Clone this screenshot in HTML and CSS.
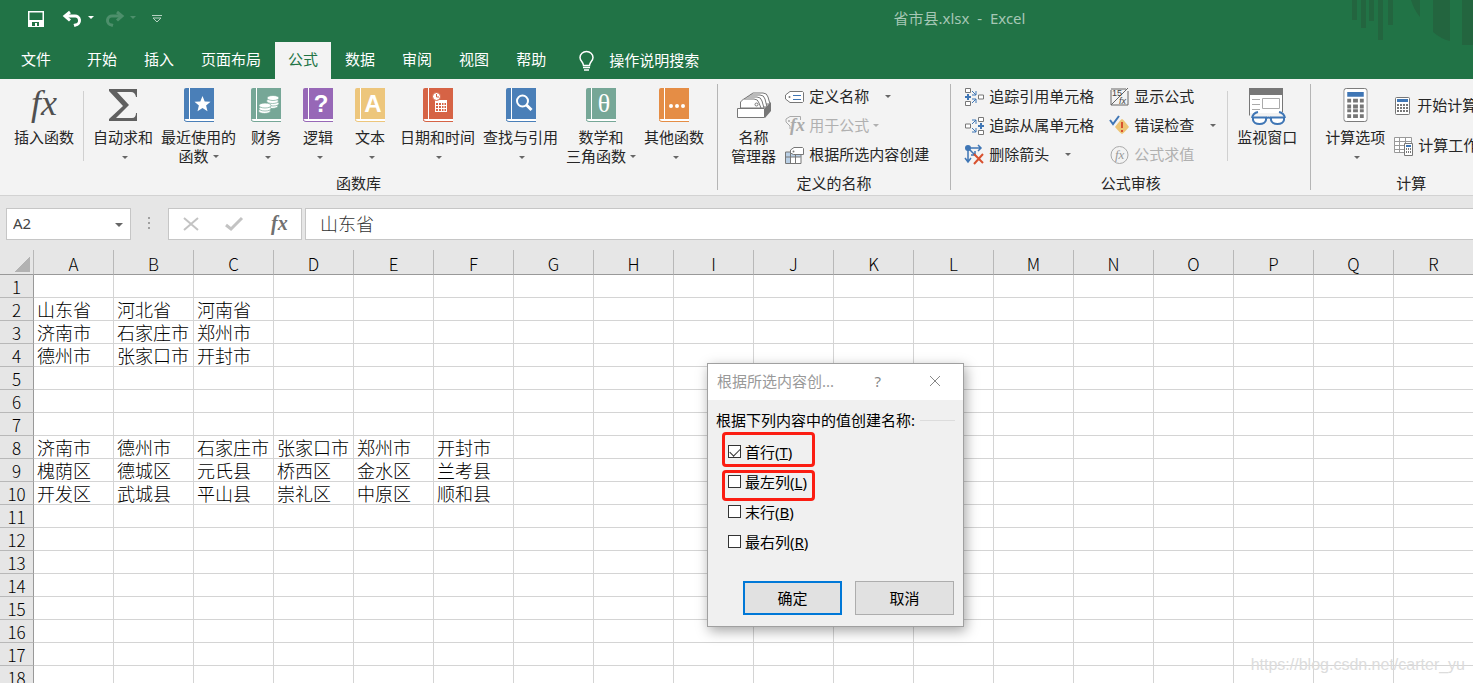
FILE: index.html
```html
<!DOCTYPE html>
<html lang="zh-CN">
<head>
<meta charset="utf-8">
<title>省市县.xlsx - Excel</title>
<link rel="stylesheet" href="styles.css">
</head>
<body>
<svg class="defs" aria-hidden="true">
  <symbol id="book" viewBox="0 0 30 34">
    <path d="M2 0H5V31H2Q1 31 0 32V2Q0 0 2 0Z" fill="currentColor"/>
    <path d="M6 0H30V31H6Z" fill="currentColor"/>
    <path d="M5 0h1v31H5zM3 31H30V33H3Q1 33 1 32 1 31 3 31Z" fill="#fff"/>
    <path d="M0 31.500Q.5 33.500 3 33.500H30" fill="none" stroke="currentColor"/>
  </symbol>
  <symbol id="calc" viewBox="0 0 25 35">
    <rect x=".5" y=".5" width="24" height="34" rx="2.500" fill="#fff" stroke="#777"/>
    <path d="M4 4h17v5H4z" fill="#3f76b5"/>
    <path d="M4 11h4v4H4zm6 0h5v4h-5zm7 0h4v4h-4zM4 17h4v4H4zm6 0h5v4h-5zm7 0h4v4h-4zM4 22h4v3H4zm6 0h5v3h-5zm7 0h4v3h-4zM4 27h4v4H4zm6 0h5v4h-5zm7 0h4v4h-4z" fill="#777"/>
  </symbol>
</svg>

<header class="titlebar">
  <div class="quick">
    <button class="q-save" aria-label="保存"><svg width="16" height="16" viewBox="0 0 16 16"><path d="M.75.75h14.500v14.500H.75z" fill="none" stroke="#fff" stroke-width="1.500"/><path d="M1 9h14v6H1z" fill="#fff"/><path d="M4 11h7v4H9v-3H7v3H4z" fill="#217346"/></svg></button>
    <button class="q-undo" aria-label="撤消"><svg width="19" height="17" viewBox="0 0 19 17"><path d="M3 5h8.500a4.500 4.500 0 0 1 1 9l-1.500.5" fill="none" stroke="#fff" stroke-width="3"/><path d="M7 1 2 5l5 4.500" fill="none" stroke="#fff" stroke-width="3"/></svg></button>
    <button class="q-more" aria-label="撤消列表"><svg width="6" height="3" viewBox="0 0 6 3"><path d="M0 0h6L3 3z" fill="#fff"/></svg></button>
    <button class="q-redo" aria-label="恢复"><svg width="19" height="17" viewBox="0 0 19 17"><path d="M16 5H7.500a4.500 4.500 0 0 0-1 9l1.500.5" fill="none" stroke="#4d8f6b" stroke-width="3"/><path d="m12 1 5 4-5 4.500" fill="none" stroke="#4d8f6b" stroke-width="3"/></svg></button>
    <button class="q-more" aria-label="恢复列表"><svg width="6" height="3" viewBox="0 0 6 3"><path d="M0 0h6L3 3z" fill="#4d8f6b"/></svg></button>
    <button class="q-custom" aria-label="自定义快速访问工具栏"><svg width="10" height="8" viewBox="0 0 10 8"><path d="M0 .5h10M1 3h8L5 7z" fill="none" stroke="#b5d2c1"/></svg></button>
  </div>
  <h1 class="doc-title">省市县.xlsx&nbsp; -&nbsp; Excel</h1>
  <svg class="pattern" width="121" height="46" viewBox="0 0 121 46" aria-hidden="true"><path d="M0 0h5v20H0zM9 0h5v28H9zM17 0h5v21h-5zM26 0h5v40h-5zM36 0h5v25h-5zM59 0h9v17Q62 10 59 0zM81 0h17v41q-9-2-17-9zM110 0h11v45h-11z" fill="#23653f"/></svg>
</header>

<nav class="tabs">
  <button class="tab file">文件</button>
  <button class="tab">开始</button>
  <button class="tab">插入</button>
  <button class="tab">页面布局</button>
  <button class="tab active">公式</button>
  <button class="tab">数据</button>
  <button class="tab">审阅</button>
  <button class="tab">视图</button>
  <button class="tab">帮助</button>
  <button class="tell"><svg width="15" height="20" viewBox="0 0 15 20"><path d="M4.500 14.500C4.500 11 1 10 1 6.500a6.500 6 0 0 1 13 0c0 3.500-3.500 4.500-3.500 8z" fill="none" stroke="#fff" stroke-width="1.500"/><path d="M4 16.500h7M5 19h5" stroke="#fff" stroke-width="1.500"/></svg>操作说明搜索</button>
</nav>

<section class="ribbon">
  <div class="group functions">
    <div class="tools">
      <button class="big first"><svg width="34" height="34" viewBox="0 0 34 34"><text x="4" y="27" class="fx-big">fx</text></svg><span>插入函数</span></button>
      <i class="rule"></i>
      <div class="library">
        <button class="big"><svg width="30" height="34" viewBox="0 0 30 34"><path d="M1 1h28v8h-1q-1-5-5-5H9l12 13L8 30h16q4 0 4-5h1v8H1v-2l14-13L1 3z" fill="#606060"/></svg><span>自动求和</span><i class="caret"></i></button>
        <button class="big blue"><svg width="30" height="34"><use href="#book"/><path d="m18.500 8 2.200 5.400 5.800.4-4.400 3.700 1.400 5.700-5-3.100-5 3.100 1.400-5.700-4.400-3.700 5.800-.4z" fill="#fff"/></svg><span>最近使用的</span><span class="line">函数<i class="caret"></i></span></button>
        <button class="big teal"><svg width="30" height="34"><use href="#book"/><g fill="#fff" stroke="#76a797" stroke-width=".7"><ellipse cx="21" cy="18" rx="6" ry="2.500"/><ellipse cx="22" cy="15.500" rx="6" ry="2.500"/><ellipse cx="21.500" cy="13" rx="6" ry="2.500"/><ellipse cx="22" cy="10" rx="6" ry="2.500"/><ellipse cx="13.500" cy="23" rx="6" ry="2.500"/><ellipse cx="14" cy="20.500" rx="6" ry="2.500"/><ellipse cx="14" cy="17.500" rx="6" ry="2.500"/></g></svg><span>财务</span><i class="caret"></i></button>
        <button class="big purple"><svg width="30" height="34"><use href="#book"/><text x="18" y="24" class="glyph">?</text></svg><span>逻辑</span><i class="caret"></i></button>
        <button class="big yellow"><svg width="30" height="34"><use href="#book"/><text x="18" y="24" class="glyph">A</text></svg><span>文本</span><i class="caret"></i></button>
        <button class="big red"><svg width="30" height="34"><use href="#book"/><path d="M12 12h12v12H12z" fill="#fff"/><path d="M13 15h2v2h-2zm3 0h2v2h-2zm3 0h1.500v2H19zm2.500 0H23v2h-1.500zM13 18h2v2h-2zm3 0h2v2h-2zm3 0h1.500v2H19zm2.500 0H23v2h-1.500zM13 21h2v2h-2zm3 0h2v2h-2zm3 0h1.500v2H19zm2.500 0H23v2h-1.500z" fill="currentColor"/><circle cx="13.500" cy="8.500" r="4" fill="#fff" stroke="currentColor"/><path d="M13.500 6v3H16" fill="none" stroke="currentColor"/></svg><span>日期和时间</span><i class="caret"></i></button>
        <button class="big blue"><svg width="30" height="34"><use href="#book"/><circle cx="16.500" cy="13" r="5.500" fill="none" stroke="#fff" stroke-width="2"/><path d="m20.500 17 5 5" stroke="#fff" stroke-width="3"/></svg><span>查找与引用</span><i class="caret"></i></button>
        <button class="big teal"><svg width="30" height="34"><use href="#book"/><text x="18" y="24" class="glyph theta">θ</text></svg><span>数学和</span><span class="line">三角函数<i class="caret"></i></span></button>
        <button class="big orange"><svg width="30" height="34"><use href="#book"/><path d="M10 18a2 2 0 1 0 4 0 2 2 0 1 0-4 0m6 0a2 2 0 1 0 4 0 2 2 0 1 0-4 0m6 0a2 2 0 1 0 4 0 2 2 0 1 0-4 0" fill="#fff"/></svg><span>其他函数</span><i class="caret"></i></button>
      </div>
    </div>
    <h2>函数库</h2>
  </div>

  <div class="group names">
    <div class="tools">
      <button class="big"><svg width="34" height="34" viewBox="0 0 34 34"><path d="M28 20l6-6v9l-6 7z" fill="#777"/><g fill="#fff" stroke="#777"><path d="M13 9V7l3-2h10q4 0 5 4l2 7h-5"/><path d="M10 11V9l3-2h10q4 0 5 4l2 8h-5"/><path d="M7 13v-2l3-2h10q4 0 5 4l2 7h-5"/><path d="M3.500 20v-6l3-3H17q4 0 5 4l2 5z"/><circle cx="19.500" cy="16.500" r="1.500"/><path d="M.5 20.500h27v9H.5z"/></g></svg><span>名称</span><span>管理器</span></button>
      <div class="rows">
        <button class="small"><svg width="19" height="20" viewBox="0 0 19 20"><path d="M5 4.500h12.500l1 1v9l-1 1H5L.5 12V8z" fill="#fff" stroke="#777"/><circle cx="4.500" cy="10" r="1" fill="#777"/><path d="M8 8.500h8M8 12.500h8" stroke="#3f76b5"/></svg><span>定义名称</span><i class="caret wide"></i></button>
        <button class="small" disabled><svg width="19" height="20" viewBox="0 0 19 20"><path d="M5 10 1 6V3l4-2.500h10.500V4M5 10v3" fill="none" stroke="#aaa"/><circle cx="4" cy="5" r="1" fill="#aaa"/><text x="5" y="15" class="fx-small">fx</text></svg><span>用于公式</span><i class="caret"></i></button>
        <button class="small"><svg width="19" height="20" viewBox="0 0 19 20"><path d="M1 7h15v11H1z" fill="#b9cfe5"/><path d="M6 12h10v6H6z" fill="#fff"/><path d="M.5 7h15.500v11.500H.5zM.5 12h15M5.500 7v11M10.500 7v11" fill="none" stroke="#777"/><path d="M9 2.500h8.500l1 1v6h-10L5.500 8V5z" fill="#fff" stroke="#777"/><circle cx="8.500" cy="6.500" r="1" fill="#777"/></svg><span>根据所选内容创建</span></button>
      </div>
    </div>
    <h2>定义的名称</h2>
  </div>

  <div class="group audit">
    <div class="tools">
      <div class="rows trace">
        <button class="small"><svg width="19" height="20" viewBox="0 0 19 20"><g fill="#fff" stroke="#777"><path d="M.5 1.500h5v4h-5zM.5 14.500h5v4h-5zM13.500 8h5v4h-5z"/></g><path d="M0 10h6M3 7v6" stroke="#3f76b5" stroke-width="2"/><path d="M7 4l4 4M11 4v4H7m0 8 4-4m0 4v-4H7" stroke="#3f76b5" fill="none"/></svg><span>追踪引用单元格</span></button>
        <button class="small"><svg width="19" height="20" viewBox="0 0 19 20"><g fill="#fff" stroke="#777"><path d="M13.500 1.500h5v4h-5zM13.500 14.500h5v4h-5zM.5 8h5v4h-5z"/></g><path d="M13 10h6M16 7v6" stroke="#3f76b5" stroke-width="2"/><path d="M7 8l4-4M7 4h4v4m-4 4 4 4m-4 0h4v-4" stroke="#3f76b5" fill="none"/></svg><span>追踪从属单元格</span></button>
        <button class="small"><svg width="19" height="20" viewBox="0 0 19 20"><circle cx="3" cy="3" r="3" fill="#3f76b5"/><path d="M3 3h13M13 0l3 3-3 3M3 3v14M0 13l3 4 3-4M4 4l6 6M10 6v4H6" fill="none" stroke="#3f76b5" stroke-width="1.500"/><path d="m9 9 9 9m0-9-9 10" stroke="#d8512f" stroke-width="2"/></svg><span>删除箭头</span><i class="caret wide"></i></button>
      </div>
      <div class="rows">
        <button class="small"><svg width="19" height="20" viewBox="0 0 19 20"><path d="M1 3v15h17M1 2h15M18 4v14M1 18 18 1" fill="none" stroke="#666"/><text x="2" y="9" class="tiny">15</text><text x="9" y="17" class="tiny slant">fx</text></svg><span>显示公式</span></button>
        <button class="small"><svg width="19" height="20" viewBox="0 0 19 20"><path d="M12 3q1 0 7 8-6 7-7 7t-7-7q6-8 7-8" fill="#edc474"/><path d="M12 6v6m0 2v2" stroke="#d8512f" stroke-width="2"/><path d="m0 4 3 4 6-8" fill="none" stroke="#3f76b5" stroke-width="2"/></svg><span>错误检查</span><i class="caret wide"></i></button>
        <button class="small" disabled><svg width="19" height="20" viewBox="0 0 19 20"><circle cx="9.500" cy="10" r="8.500" fill="none" stroke="#aaa"/><text x="5" y="14" class="fx-round">fx</text></svg><span>公式求值</span></button>
      </div>
      <i class="rule"></i>
      <button class="big watch"><svg width="36" height="38" viewBox="0 0 36 38"><path d="M1 5h32v20H1z" fill="#fff"/><path d="M.5 6v21.500M33.500 6v18" stroke="#777"/><path d="M0 0h34v7H0z" fill="#777"/><path d="M3 11.500h8M3 16.500h8M3 21.500h8M13.500 10.500h17v10h-17z" fill="none" stroke="#aaa"/><g fill="#fff" stroke="#3f76b5" stroke-width="2"><path d="M4 29.500h13v2.500q-1 4-6.500 4T4 32zM22 29.500h13v2.500q-1 4-6.500 4T22 32z"/><path d="M3 30q1-5 6-6M36 30q-1-5-6-6M17 30q2.500-1 5 0" fill="none"/></g></svg><span>监视窗口</span></button>
    </div>
    <h2>公式审核</h2>
  </div>

  <div class="group calculation">
    <div class="tools">
      <button class="big"><svg width="25" height="34" viewBox="0 0 25 35"><use href="#calc"/></svg><span>计算选项</span><i class="caret"></i></button>
      <div class="rows loose">
        <button class="small"><svg width="17" height="20" viewBox="0 0 17 20"><rect x="1.500" y="1.500" width="14" height="17" rx="1" fill="#fff" stroke="#777"/><path d="M3 3h11v3H3z" fill="#3f76b5"/><path d="M3 9h11M3 12h11M3 15h11" stroke="#777" stroke-width="2" stroke-dasharray="2 1"/></svg><span>开始计算</span></button>
        <button class="small"><svg width="19" height="20" viewBox="0 0 19 20"><path d="M.5 1.500h17v15H.5zM.5 5.500h17M.5 9.500h17M.5 13.500h17M5.500 1v15M11.500 1v15" fill="#fff" stroke="#999"/><path d="M10.500 7.500h8v12h-8z" fill="#fff" stroke="#777"/><path d="M12 9h5v2h-5z" fill="#3f76b5"/><path d="M12 13h5M12 16h5" stroke="#777" stroke-dasharray="1 1" stroke-width="2"/></svg><span>计算工作表</span></button>
      </div>
    </div>
    <h2>计算</h2>
  </div>
</section>

<section class="formula-bar">
  <div class="name-box"><input aria-label="名称框" value="A2"><button aria-label="名称列表"><i class="caret"></i></button></div>
  <svg class="grip" width="3" height="13" viewBox="0 0 3 13"><path d="M0 0h2v2H0zM0 5h2v2H0zM0 10h2v2H0z" fill="#a0a0a0"/></svg>
  <div class="entry">
    <button aria-label="取消输入"><svg width="16" height="14" viewBox="0 0 16 14"><path d="m1 1 14 12M15 1 1 13" stroke="#c3c3c3" stroke-width="2"/></svg></button>
    <button aria-label="输入"><svg width="18" height="14" viewBox="0 0 18 14"><path d="m1 8 5 4L17 1" fill="none" stroke="#c3c3c3" stroke-width="3"/></svg></button>
    <button aria-label="插入函数"><svg width="18" height="22" viewBox="0 0 18 22"><text x="2" y="17" class="fx-bar">fx</text></svg></button>
  </div>
  <input class="formula" aria-label="编辑栏" value="山东省">
</section>

<main class="sheet">
  <table id="grid"></table>
  <p class="watermark">https://blog.csdn.net/carter_yu</p>
</main>

<form class="dialog" role="dialog" aria-label="根据所选内容创建名称">
  <div class="dialog-title"><span>根据所选内容创...</span><button type="button" class="help" aria-label="帮助">?</button><button type="button" aria-label="关闭"><svg width="12" height="12" viewBox="0 0 12 12"><path d="m1 1 10 10M11 1 1 11" stroke="#888"/></svg></button></div>
  <fieldset>
    <legend>根据下列内容中的值创建名称:</legend>
    <label><input type="checkbox" checked>首行(<u>T</u>)</label>
    <label><input type="checkbox">最左列(<u>L</u>)</label>
    <label><input type="checkbox">末行(<u>B</u>)</label>
    <label><input type="checkbox">最右列(<u>R</u>)</label>
    <i class="mark top"></i>
    <i class="mark left"></i>
  </fieldset>
  <div class="actions"><button type="button" class="ok">确定</button><button type="button">取消</button></div>
</form>
<script src="grid.js"></script>
</body>
</html>
```
FILE: styles.css
```css
* { box-sizing: border-box; }
body {
  margin: 0;
  height: 100vh;
  overflow: hidden;
  display: flex;
  flex-direction: column;
  position: relative;
  background: #e6e6e6;
  color: #262626;
  font: 400 15px/19px "Noto Sans", "Noto Sans CJK SC", sans-serif;
}
button, input { font: inherit; color: inherit; }
button { border: 0; padding: 0; background: none; white-space: nowrap; }
svg { display: block; flex: none; overflow: visible; }
.defs { position: absolute; width: 0; height: 0; }

.caret {
  display: inline-block;
  border: 3px solid transparent;
  border-top-color: #666;
  border-bottom-width: 0;
}

/* Title bar */
.titlebar {
  flex: none;
  position: relative;
  height: 42px;
  display: flex;
  align-items: flex-start;
  background: #217346;
}
.quick { display: flex; align-items: center; height: 38px; padding-left: 28px; }
.q-save { margin-right: 19px; }
.q-more { margin: 0 11px 4px 6px; }
.q-custom { margin-left: 5px; }
.doc-title {
  position: absolute;
  inset: 8px 0 auto 446px;
  margin: 0;
  text-align: center;
  font-size: 15px;
  line-height: 20px;
  font-weight: 400;
  color: #a6c7b5;
}
.pattern { position: absolute; right: 0; top: 0; z-index: 1; }

/* Tabs */
.tabs {
  flex: none;
  height: 37px;
  display: flex;
  gap: 1px;
  padding-left: 8px;
  background: #217346;
  color: #fff;
}
.tab { padding: 0 13px 2px; }
.file { margin-right: 9px; }
.active { background: #f3f3f3; color: #217346; }
.tell { display: flex; align-items: center; gap: 15px; margin-left: 19px; }

/* Ribbon */
.ribbon {
  flex: none;
  display: flex;
  height: 117px;
  overflow: hidden;
  background: #f3f3f3;
  border-bottom: 1px solid #d2d2d2;
}
.group {
  flex: none;
  display: flex;
  flex-direction: column;
  margin: 5px 0;
  border-right: 1px solid #b5b5b5;
}
.group h2 {
  margin: 0;
  font-size: 15px;
  line-height: 19px;
  font-weight: 400;
  text-align: center;
}
.tools { flex: none; display: flex; align-items: flex-start; height: 92px; margin-top: -2px; padding: 0 14px; }
.functions .tools { padding-right: 13px; }
.library { display: flex; gap: 8px; }
.big {
  flex: none;
  min-width: 44px;
  display: flex;
  flex-direction: column;
  align-items: center;
  padding-top: 6px;
}
.big svg { margin-bottom: 6px; }
.big > .caret { margin: 9px 0 0 3px; }
.line { display: flex; align-items: center; gap: 4px; }
.rule { flex: none; width: 1px; height: 70px; margin: 9px 9px 0; background: #d0d0d0; }
.blue { --c: #4a7fb8; }
.teal { --c: #76a797; }
.purple { --c: #9768b7; }
.yellow { --c: #edc67c; }
.red { --c: #d66345; }
.orange { --c: #e58d45; }
.big > svg { color: var(--c); }
.fx-big { font: italic 400 36px "Liberation Serif", serif; fill: #505050; }
.glyph { font: 700 24px "Liberation Sans", sans-serif; fill: #fff; text-anchor: middle; }
.theta { font: 400 26px "Liberation Serif", serif; }
.fx-small { font: italic 700 18px "Liberation Serif", serif; fill: #aaa; }
.fx-round { font: italic 400 13px "Liberation Serif", serif; fill: #999; }
.fx-bar { font: italic 700 20px "Liberation Serif", serif; fill: #707070; }
.tiny { font: 400 9px "Liberation Sans", sans-serif; fill: #444; }
.slant { font-style: italic; }

.rows { display: flex; flex-direction: column; }
.small { height: 29px; display: flex; align-items: center; gap: 5px; }
.small:disabled { color: #b0b0b0; }
.small:disabled .caret { border-top-color: #b0b0b0; margin-left: -1px; }
.wide { margin-left: 11px; }
.names .tools { padding: 0 21px 0 13px; }
.names .rows { margin-left: 9px; }
.audit .trace { margin-right: 16px; }
.audit .rule { margin-left: 11px; }
.watch svg { margin-bottom: 2px; }
.audit .tools { padding-right: 13px; }
.calculation .rows { margin-left: 9px; }
.calculation h2 { padding-left: 4px; }
.loose { gap: 11px; padding-top: 9px; }
.loose .small:first-child { gap: 6px; }

/* Formula bar */
.formula-bar {
  flex: none;
  height: 54px;
  display: flex;
  align-items: center;
  padding: 1px 0 0 6px;
}
.name-box, .entry, .formula {
  height: 32px;
  border: 1px solid #c6c6c6;
  background: #fff;
}
.name-box { width: 125px; display: flex; align-items: center; color: #444; }
.name-box input { flex: 1; min-width: 0; border: 0; padding: 0 6px; background: none; }
.name-box button { width: 22px; line-height: 0; }
.name-box .caret { border-width: 4px 4px 0; }
.grip { margin: 0 17px; }
.entry { width: 134px; display: flex; align-items: center; justify-content: space-between; padding: 0 14px; }
.formula {
  flex: 1;
  min-width: 0;
  margin-left: 3px;
  padding: 0 14px 2px;
  border-right: 0;
  font-size: 18px;
  font-weight: 300;
  color: #333;
}

/* Sheet */
.sheet { flex: 1; min-height: 0; position: relative; overflow: hidden; background: #fff; }
#grid {
  width: 1474px;
  min-width: 100%;
  table-layout: fixed;
  border-collapse: separate;
  border-spacing: 0;
  color: #000;
  font-size: 18px;
  font-weight: 300;
  line-height: 20px;
}
#grid th {
  padding: 2px 0 0;
  font-family: "Noto Sans CJK SC", sans-serif;
  font-size: 17px;
  font-weight: 300;
  background: #e6e6e6;
  border: solid #b8b8b8;
  border-width: 0 1px 1px 0;
}
#grid thead th { height: 25px; padding-top: 4px; border-bottom-color: #999; }
#grid tbody th { border-right-color: #999; }
#grid th:first-child { width: 34px; }
#grid td {
  height: 23px;
  padding: 2px 0 0 3px;
  white-space: nowrap;
  border: solid #d4d4d4;
  border-width: 0 1px 1px 0;
}
.corner { display: block; width: 15px; height: 15px; margin-left: 15px; background: linear-gradient(135deg, transparent 50%, #b2b2b2 50%); }
.watermark {
  position: absolute;
  right: 8px;
  bottom: 8px;
  margin: 0;
  font: 400 16px/20px "Liberation Sans", sans-serif;
  color: #dcdcdc;
}

/* Dialog */
.dialog {
  position: absolute;
  left: 707px;
  top: 363px;
  width: 257px;
  background: #f0f0f0;
  border: 1px solid #a0a0a0;
  box-shadow: 2px 4px 12px rgba(0, 0, 0, .35);
  color: #000;
}
.dialog-title {
  height: 36px;
  display: flex;
  align-items: center;
  padding: 0 22px 2px 9px;
  background: #fff;
  color: #999;
}
.dialog-title span { flex: 1; }
.help { margin-right: 48px; color: #888; }
.dialog fieldset {
  position: relative;
  margin: 11px 8px 0;
  padding: 7px 0 0 12px;
  min-width: 0;
  border: 0;
}
.dialog legend {
  width: 239px;
  margin-left: -12px;
  padding: 0;
  display: flex;
  align-items: center;
  gap: 5px;
}
.dialog legend::after { content: ""; flex: 1; border-top: 1px solid #dcdcdc; }
.dialog label { display: flex; align-items: center; height: 30px; }
.dialog input {
  appearance: none;
  width: 13px;
  height: 13px;
  margin: 0 4px 2px 0;
  border: 1px solid #333;
  background: #fff;
}
.dialog input:checked::after {
  content: "";
  display: block;
  width: 9px;
  height: 5px;
  margin: 2px 1px;
  border: solid #333;
  border-width: 0 0 1px 1px;
  transform: rotate(-45deg);
}
.mark { position: absolute; left: 6px; width: 93px; border: 3px solid #fb1d12; border-radius: 4px; pointer-events: none; }
.mark.top { top: 2px; height: 35px; }
.mark.left { top: 40px; height: 31px; }
.actions { display: flex; justify-content: flex-end; gap: 13px; padding: 24px 9px 11px; }
.actions button { width: 99px; height: 34px; background: #e1e1e1; border: 1px solid #adadad; }
.actions .ok { border: 2px solid #0078d7; }
```
FILE: grid.js
```js
const data = {
  2: ["山东省", "河北省", "河南省"],
  3: ["济南市", "石家庄市", "郑州市"],
  4: ["德州市", "张家口市", "开封市"],
  8: ["济南市", "德州市", "石家庄市", "张家口市", "郑州市", "开封市"],
  9: ["槐荫区", "德城区", "元氏县", "桥西区", "金水区", "兰考县"],
  10: ["开发区", "武城县", "平山县", "崇礼区", "中原区", "顺和县"]
};
const columns = [..."ABCDEFGHIJKLMNOPQR"];
const head = "<thead><tr><th><i class='corner'></i></th>" +
  columns.map(c => `<th scope="col">${c}</th>`).join("") + "</tr></thead>";
let body = "<tbody>";
for (let r = 1; r <= 18; r++) {
  body += `<tr><th scope="row">${r}</th>` +
    columns.map((c, i) => `<td>${(data[r] || [])[i] || ""}</td>`).join("") + "</tr>";
}
document.getElementById("grid").innerHTML = head + body + "</tbody>";
```
